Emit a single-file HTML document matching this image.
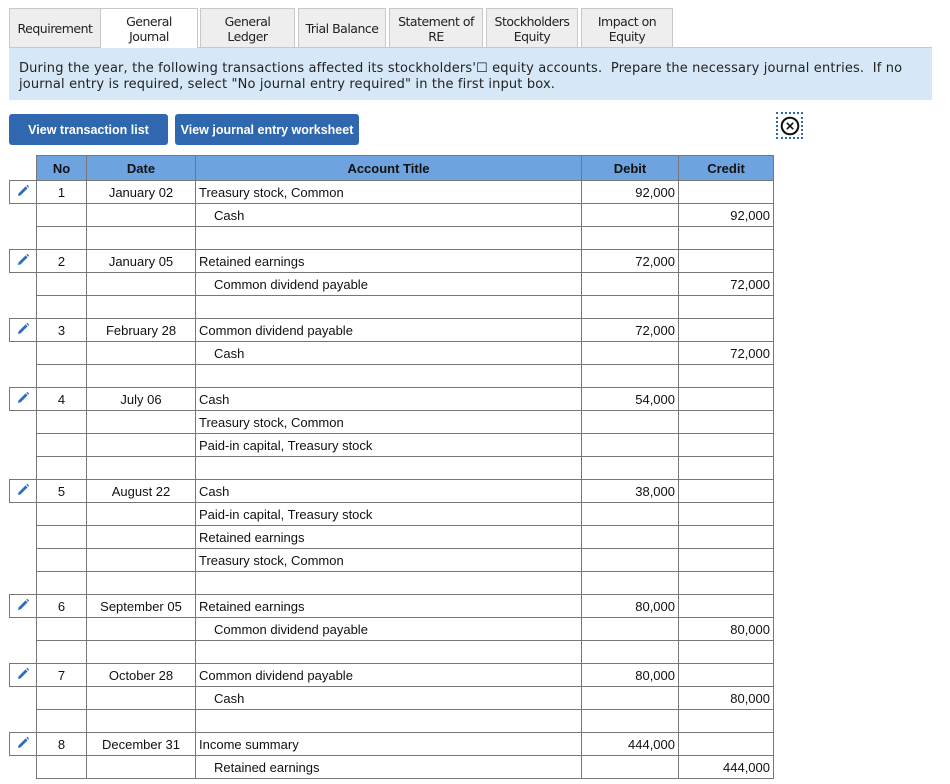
<!DOCTYPE html>
<html><head><meta charset="utf-8"><style>
body{margin:0;background:#fff;font-family:"Liberation Sans",Arial,sans-serif;width:950px;height:784px;overflow:hidden;position:relative}
.tab{position:absolute;top:8px;height:40px;background:#eee;border:1px solid #c8c8c8;border-bottom:none;box-sizing:border-box;font-family:"DejaVu Sans",sans-serif;font-size:12.5px;color:#222;display:flex;align-items:center;justify-content:center;text-align:center;line-height:15px;letter-spacing:-0.5px}
.tab.act{background:#fff}
.line{position:absolute;top:47px;height:1px;background:#c8c8c8}
.info{position:absolute;top:48px;left:9px;width:923px;height:52px;background:#d6e8f7;font-family:"DejaVu Sans",sans-serif;font-size:13px;color:#222;box-sizing:border-box;padding:13px 10px;line-height:16px;letter-spacing:0.15px}
.btn{position:absolute;top:114px;height:31px;background:#3068b0;color:#fff;font-weight:bold;font-size:12.5px;border-radius:3px;display:flex;align-items:center;justify-content:center}
table{position:absolute;left:9px;top:155px;border-collapse:collapse;table-layout:fixed;font-size:13px;color:#111}
td{height:23px;border:1px solid #777;padding:0 3px;white-space:nowrap;box-sizing:border-box}
td.p{border:none}
td.pe{border:1px solid #777;text-align:center;padding:0}
tr.h td{background:#6fa3e0;font-weight:bold;text-align:center;height:25px}
tr.h td.p{background:none}
.c{text-align:center}.r{text-align:right}.i{padding-left:18px}
</style></head><body>
<div class="tab" style="left:9px;width:92px">Requirement</div>
<div class="tab act" style="left:100px;width:98px">General<br>Journal</div>
<div class="tab" style="left:200px;width:95px">General<br>Ledger</div>
<div class="tab" style="left:298px;width:88px">Trial Balance</div>
<div class="tab" style="left:389px;width:94px">Statement of<br>RE</div>
<div class="tab" style="left:486px;width:92px">Stockholders<br>Equity</div>
<div class="tab" style="left:581px;width:92px">Impact on<br>Equity</div>
<div class="line" style="left:9px;width:91px"></div>
<div class="line" style="left:198px;width:734px"></div>
<div class="info">During the year, the following transactions affected its stockholders'☐ equity accounts.&nbsp; Prepare the necessary journal entries.&nbsp; If no journal entry is required, select "No journal entry required" in the first input box.</div>
<div class="btn" style="left:9px;width:159px">View transaction list</div>
<div class="btn" style="left:175px;width:184px">View journal entry worksheet</div>
<div style="position:absolute;left:776px;top:112px;width:27px;height:27px;border:2px dotted #3068b0;box-sizing:border-box"></div>
<svg style="position:absolute;left:780px;top:116px" width="20" height="20" viewBox="0 0 20 20"><circle cx="10" cy="10" r="8.3" fill="none" stroke="#111" stroke-width="2"/><path d="M6.8 6.8L13.2 13.2M13.2 6.8L6.8 13.2" stroke="#111" stroke-width="1.6"/></svg>
<table>
<colgroup><col style="width:27px"><col style="width:50px"><col style="width:109px"><col style="width:386px"><col style="width:97px"><col style="width:95px"></colgroup>
<tr class="h"><td class="p"></td><td>No</td><td>Date</td><td>Account Title</td><td>Debit</td><td>Credit</td></tr>
<tr><td class="pe"><svg width="14" height="14" viewBox="0 0 14 14"><path d="M2 12L2.6 9.4L9.6 2.4L11.6 4.4L4.6 11.4Z" fill="#2f6cc0"/><path d="M10.3 1.7L11.2 0.8L13.2 2.8L12.3 3.7Z" fill="#2f6cc0"/></svg></td><td class="c">1</td><td class="c">January 02</td><td>Treasury stock, Common</td><td class="r">92,000</td><td></td></tr>
<tr><td class="p"></td><td></td><td></td><td class="i">Cash</td><td></td><td class="r">92,000</td></tr>
<tr><td class="p"></td><td></td><td></td><td></td><td></td><td></td></tr>
<tr><td class="pe"><svg width="14" height="14" viewBox="0 0 14 14"><path d="M2 12L2.6 9.4L9.6 2.4L11.6 4.4L4.6 11.4Z" fill="#2f6cc0"/><path d="M10.3 1.7L11.2 0.8L13.2 2.8L12.3 3.7Z" fill="#2f6cc0"/></svg></td><td class="c">2</td><td class="c">January 05</td><td>Retained earnings</td><td class="r">72,000</td><td></td></tr>
<tr><td class="p"></td><td></td><td></td><td class="i">Common dividend payable</td><td></td><td class="r">72,000</td></tr>
<tr><td class="p"></td><td></td><td></td><td></td><td></td><td></td></tr>
<tr><td class="pe"><svg width="14" height="14" viewBox="0 0 14 14"><path d="M2 12L2.6 9.4L9.6 2.4L11.6 4.4L4.6 11.4Z" fill="#2f6cc0"/><path d="M10.3 1.7L11.2 0.8L13.2 2.8L12.3 3.7Z" fill="#2f6cc0"/></svg></td><td class="c">3</td><td class="c">February 28</td><td>Common dividend payable</td><td class="r">72,000</td><td></td></tr>
<tr><td class="p"></td><td></td><td></td><td class="i">Cash</td><td></td><td class="r">72,000</td></tr>
<tr><td class="p"></td><td></td><td></td><td></td><td></td><td></td></tr>
<tr><td class="pe"><svg width="14" height="14" viewBox="0 0 14 14"><path d="M2 12L2.6 9.4L9.6 2.4L11.6 4.4L4.6 11.4Z" fill="#2f6cc0"/><path d="M10.3 1.7L11.2 0.8L13.2 2.8L12.3 3.7Z" fill="#2f6cc0"/></svg></td><td class="c">4</td><td class="c">July 06</td><td>Cash</td><td class="r">54,000</td><td></td></tr>
<tr><td class="p"></td><td></td><td></td><td>Treasury stock, Common</td><td></td><td></td></tr>
<tr><td class="p"></td><td></td><td></td><td>Paid-in capital, Treasury stock</td><td></td><td></td></tr>
<tr><td class="p"></td><td></td><td></td><td></td><td></td><td></td></tr>
<tr><td class="pe"><svg width="14" height="14" viewBox="0 0 14 14"><path d="M2 12L2.6 9.4L9.6 2.4L11.6 4.4L4.6 11.4Z" fill="#2f6cc0"/><path d="M10.3 1.7L11.2 0.8L13.2 2.8L12.3 3.7Z" fill="#2f6cc0"/></svg></td><td class="c">5</td><td class="c">August 22</td><td>Cash</td><td class="r">38,000</td><td></td></tr>
<tr><td class="p"></td><td></td><td></td><td>Paid-in capital, Treasury stock</td><td></td><td></td></tr>
<tr><td class="p"></td><td></td><td></td><td>Retained earnings</td><td></td><td></td></tr>
<tr><td class="p"></td><td></td><td></td><td>Treasury stock, Common</td><td></td><td></td></tr>
<tr><td class="p"></td><td></td><td></td><td></td><td></td><td></td></tr>
<tr><td class="pe"><svg width="14" height="14" viewBox="0 0 14 14"><path d="M2 12L2.6 9.4L9.6 2.4L11.6 4.4L4.6 11.4Z" fill="#2f6cc0"/><path d="M10.3 1.7L11.2 0.8L13.2 2.8L12.3 3.7Z" fill="#2f6cc0"/></svg></td><td class="c">6</td><td class="c">September 05</td><td>Retained earnings</td><td class="r">80,000</td><td></td></tr>
<tr><td class="p"></td><td></td><td></td><td class="i">Common dividend payable</td><td></td><td class="r">80,000</td></tr>
<tr><td class="p"></td><td></td><td></td><td></td><td></td><td></td></tr>
<tr><td class="pe"><svg width="14" height="14" viewBox="0 0 14 14"><path d="M2 12L2.6 9.4L9.6 2.4L11.6 4.4L4.6 11.4Z" fill="#2f6cc0"/><path d="M10.3 1.7L11.2 0.8L13.2 2.8L12.3 3.7Z" fill="#2f6cc0"/></svg></td><td class="c">7</td><td class="c">October 28</td><td>Common dividend payable</td><td class="r">80,000</td><td></td></tr>
<tr><td class="p"></td><td></td><td></td><td class="i">Cash</td><td></td><td class="r">80,000</td></tr>
<tr><td class="p"></td><td></td><td></td><td></td><td></td><td></td></tr>
<tr><td class="pe"><svg width="14" height="14" viewBox="0 0 14 14"><path d="M2 12L2.6 9.4L9.6 2.4L11.6 4.4L4.6 11.4Z" fill="#2f6cc0"/><path d="M10.3 1.7L11.2 0.8L13.2 2.8L12.3 3.7Z" fill="#2f6cc0"/></svg></td><td class="c">8</td><td class="c">December 31</td><td>Income summary</td><td class="r">444,000</td><td></td></tr>
<tr><td class="p"></td><td></td><td></td><td class="i">Retained earnings</td><td></td><td class="r">444,000</td></tr>
</table>
</body></html>
